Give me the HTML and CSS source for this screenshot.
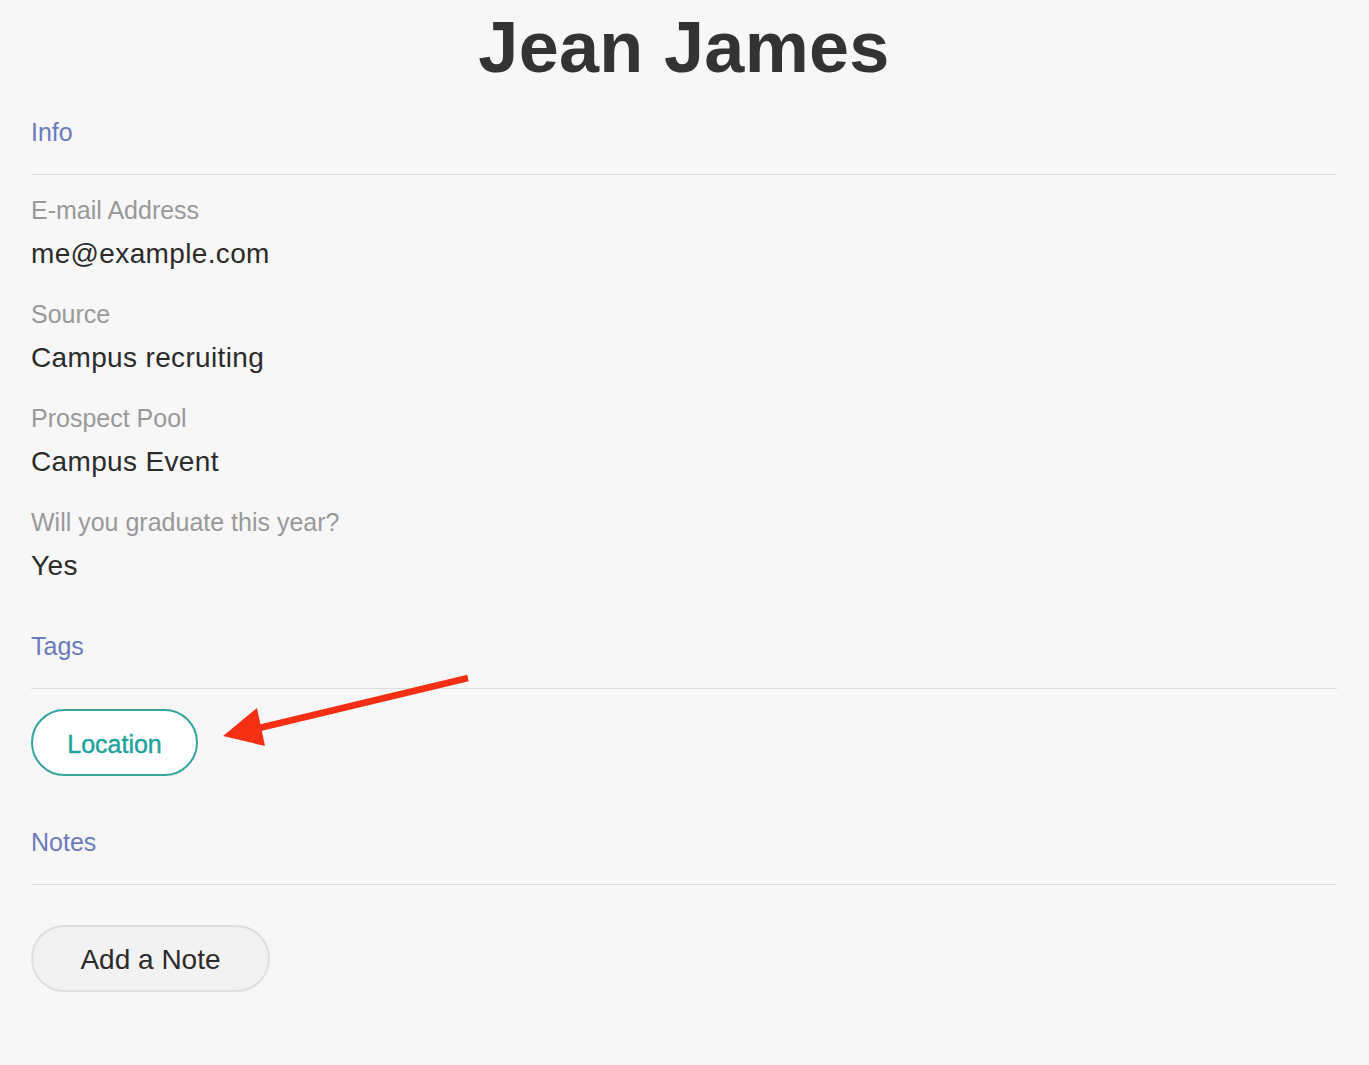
FILE: index.html
```html
<!DOCTYPE html>
<html lang="en">
<head>
<meta charset="utf-8">
<title>Jean James</title>
<link rel="stylesheet" href="styles.css">
</head>
<body>
<main class="page">
  <h1 class="title">Jean James</h1>

  <section class="section section-info">
    <h2 class="section-head">Info</h2>
    <div class="fields">
      <div class="field">
        <div class="label">E-mail Address</div>
        <div class="value">me@example.com</div>
      </div>
      <div class="field">
        <div class="label">Source</div>
        <div class="value">Campus recruiting</div>
      </div>
      <div class="field">
        <div class="label">Prospect Pool</div>
        <div class="value">Campus Event</div>
      </div>
      <div class="field">
        <div class="label">Will you graduate this year?</div>
        <div class="value">Yes</div>
      </div>
    </div>
  </section>

  <section class="section section-tags">
    <h2 class="section-head">Tags</h2>
    <div class="tags">
      <span class="tag">Location</span>
    </div>
  </section>

  <section class="section section-notes">
    <h2 class="section-head">Notes</h2>
    <div class="notes">
      <button class="note-btn" type="button">Add a Note</button>
    </div>
  </section>

  <svg class="arrow" width="1369" height="1065" viewBox="0 0 1369 1065" aria-hidden="true">
    <line x1="468" y1="678" x2="255" y2="729" stroke="#f52f13" stroke-width="6.5" stroke-linecap="butt"/>
    <polygon points="223,736 257,708 265,746" fill="#f52f13"/>
  </svg>
</main>
</body>
</html>
```

FILE: styles.css
```css
html, body {
  margin: 0;
  padding: 0;
  background: #f7f7f7;
}

body {
  font-family: "Liberation Sans", Arial, Helvetica, sans-serif;
  color: #333333;
}

.page {
  position: relative;
  padding: 11px 32px 60px 31px;
  min-height: 1000px;
}

.title {
  margin: 0;
  font-size: 72px;
  line-height: 72px;
  font-weight: bold;
  letter-spacing: 0.3px;
  text-align: center;
  color: #333333;
}

.section-head {
  margin: 0;
  font-size: 25px;
  line-height: 30px;
  font-weight: normal;
  color: #6b7bbd;
  padding-bottom: 27px;
  border-bottom: 1px solid #dddddd;
}

.section-info {
  margin-top: 34px;
}

.fields {
  display: flex;
  flex-direction: column;
  gap: 28px;
  padding-top: 20px;
}

.field {
  display: flex;
  flex-direction: column;
  gap: 12px;
}

.label {
  font-size: 25px;
  line-height: 30px;
  color: #999999;
}

.value {
  font-size: 28px;
  line-height: 34px;
  letter-spacing: 0.35px;
  color: #2b2b2b;
}

.section-tags {
  margin-top: 48px;
}

.tags {
  display: flex;
  padding-top: 20px;
}

.tag {
  display: flex;
  align-items: center;
  justify-content: center;
  box-sizing: border-box;
  width: 167px;
  height: 67px;
  padding-top: 3px;
  border: 2px solid #35a5a0;
  border-radius: 34px;
  background: #ffffff;
  color: #1fa39b;
  font-size: 25px;
  font-weight: normal;
  -webkit-text-stroke: 0.45px #1fa39b;
}

.section-notes {
  margin-top: 51px;
}

.notes {
  display: flex;
  padding-top: 40px;
}

.note-btn {
  box-sizing: border-box;
  width: 239px;
  height: 67px;
  border: 2px solid #dfdfdf;
  border-radius: 34px;
  background: #f2f2f2;
  color: #2b2b2b;
  font-family: "Liberation Sans", Arial, Helvetica, sans-serif;
  font-size: 28px;
  padding: 3px 0 0;
}

.arrow {
  position: absolute;
  left: 0;
  top: 0;
  pointer-events: none;
}
```
